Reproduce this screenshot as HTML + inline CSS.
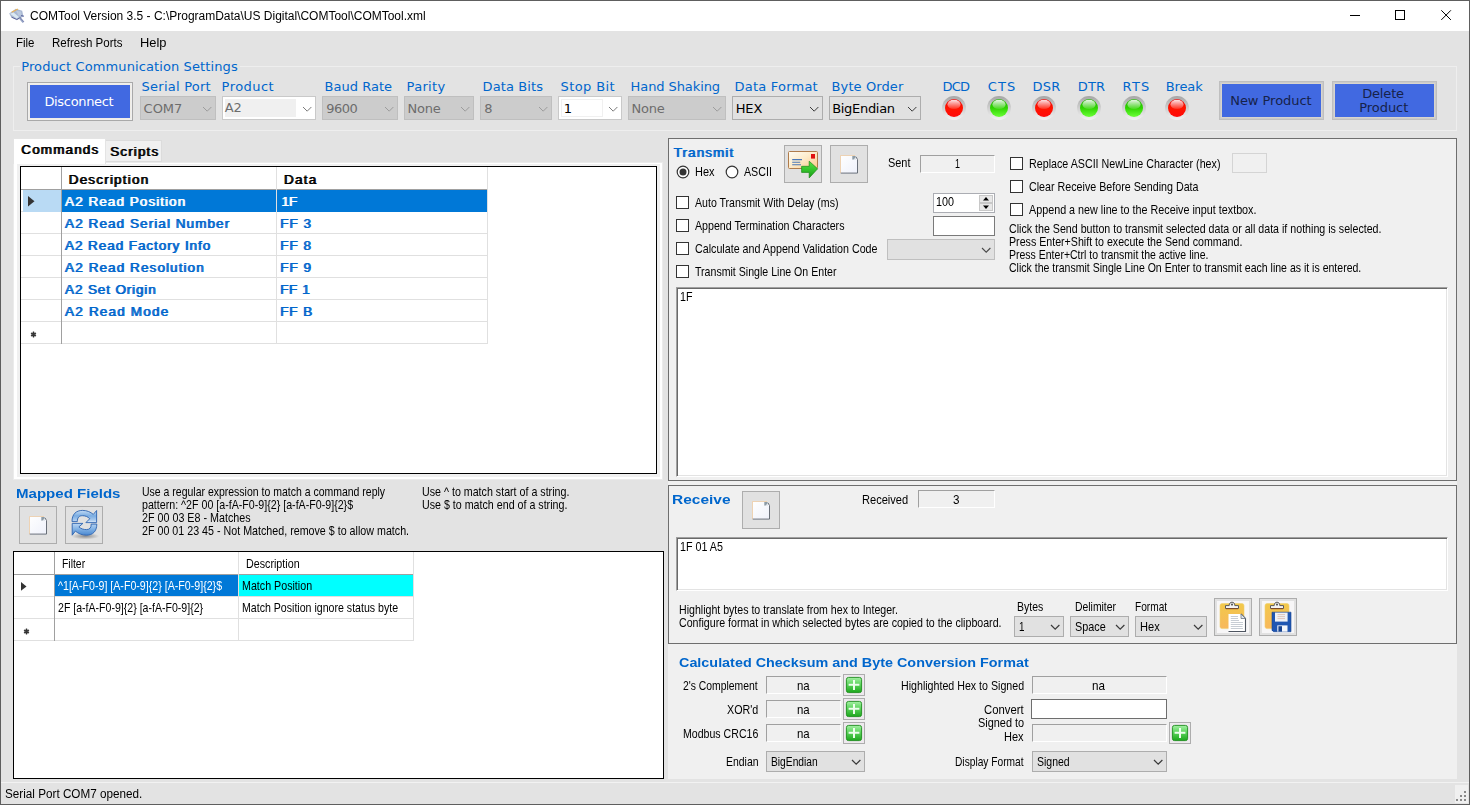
<!DOCTYPE html><html><head><meta charset="utf-8"><title>COMTool</title><style>
html,body{margin:0;padding:0}body{width:1470px;height:805px;overflow:hidden;background:#E3E3E3;position:relative;font-family:"Liberation Sans",sans-serif}
#w div{position:absolute;box-sizing:border-box}#w span.t{position:absolute;white-space:pre;line-height:1;transform-origin:0 50%}#w svg{position:absolute;overflow:visible}
.fverd{font-family:"DejaVu Sans","Liberation Sans",sans-serif}
</style></head><body><div id="w">
<svg style="left:0;top:0" width="0" height="0"><defs>
<linearGradient id="gDoc" x1="0" y1="0" x2="1" y2="1"><stop offset="0" stop-color="#ffffff"/><stop offset="1" stop-color="#eef1fb"/></linearGradient>
<linearGradient id="gEnv" x1="0" y1="0" x2="1" y2="1"><stop offset="0" stop-color="#fffdf6"/><stop offset="0.45" stop-color="#fdeccc"/><stop offset="1" stop-color="#fcc98a"/></linearGradient>
<linearGradient id="gArr" x1="0" y1="0" x2="0" y2="1"><stop offset="0" stop-color="#58e048"/><stop offset="0.5" stop-color="#35c42c"/><stop offset="1" stop-color="#1a9a16"/></linearGradient>
<linearGradient id="gRef" x1="0" y1="0" x2="0" y2="1"><stop offset="0" stop-color="#c4dcf5"/><stop offset="0.45" stop-color="#7aace2"/><stop offset="0.8" stop-color="#a9caee"/><stop offset="1" stop-color="#e4eefa"/></linearGradient>
<linearGradient id="gRef2" x1="0" y1="0" x2="0" y2="1"><stop offset="0" stop-color="#bcd7f3"/><stop offset="0.5" stop-color="#7fb0e4"/><stop offset="1" stop-color="#4a88d0"/></linearGradient>
<linearGradient id="gClip" x1="0" y1="0" x2="0" y2="1"><stop offset="0" stop-color="#f2c84a"/><stop offset="1" stop-color="#f8b85c"/></linearGradient>
<linearGradient id="gPlus" x1="0" y1="0" x2="0" y2="1"><stop offset="0" stop-color="#a4f0a4"/><stop offset="0.45" stop-color="#5cd45c"/><stop offset="1" stop-color="#1ca61c"/></linearGradient>
<radialGradient id="gSh" cx="0.5" cy="0.5" r="0.5"><stop offset="0" stop-color="#000" stop-opacity="0.38"/><stop offset="1" stop-color="#000" stop-opacity="0"/></radialGradient>
</defs></svg>
<div style="left:0px;top:0px;width:1470px;height:805px;background:#E3E3E3;border:1px solid #5E5E5E;"></div>
<div style="left:1px;top:1px;width:1468px;height:30px;background:#fff;"></div>
<svg style="left:8px;top:7px" width="18" height="18" viewBox="0 0 18 18"><path d="M1.2 6.6L7.8 1.8L14.2 3.8L15.4 9.4L9.4 12.8L3.4 10.6Z" fill="#a9b8d2"/><path d="M3.4 4.8L9.6 1.4L10.2 2.4L4 5.8Z" fill="#f0b048" opacity="0.9"/><path d="M2 6.8L5.6 5.4L11 10L8.6 11.6Z" fill="#dbe9f3"/><path d="M8 3.8L13 4.4L13.6 8.4L10.6 8.8Z" fill="#bccadf"/><path d="M3.6 10.2L8.8 12.6L12.6 10.4M13 8.6L16 9.2" stroke="#4a5290" stroke-width="1" fill="none" opacity="0.85"/><path d="M11.8 11.2L15.4 15.4" stroke="#97a4c6" stroke-width="2"/><path d="M12.6 11L15.9 14.8" stroke="#5a649a" stroke-width="0.6"/></svg>
<svg style="left:1340px;top:1px" width="128" height="30" viewBox="0 0 128 30"><g stroke="#000" stroke-width="1" fill="none"><path d="M10 14.5H20"/><rect x="55.5" y="9.5" width="9" height="9"/><path d="M101.3 9.3l9.6 9.6M110.9 9.3l-9.6 9.6"/></g></svg>
<div style="left:13px;top:66px;width:1444px;height:65px;border:1px solid #EEEEEE;"></div>
<div style="left:20px;top:60px;width:220px;height:12px;background:#E3E3E3;"></div>
<div style="left:27px;top:82px;width:106px;height:39px;background:#4169E1;border:1px solid #A9A9A9;box-shadow:inset 0 0 0 1px #EFEFEF,inset 0 0 0 2px #F0EDE6;"></div>
<div style="left:140px;top:96px;width:76px;height:24px;background:#CCCCCC;border:1px solid #BFBFBF;"></div>
<svg style="left:201.8px;top:105.7px" width="10.4" height="6.2" viewBox="-1 -1 10.4 6.2"><path d="M0 0L4.2 4.2L8.4 0" fill="none" stroke="#9c9c9c" stroke-width="1"/></svg>
<div style="left:222px;top:96px;width:94px;height:24px;background:#fff;border:1px solid #C9C9C9;"></div>
<svg style="left:301.8px;top:105.7px" width="10.4" height="6.2" viewBox="-1 -1 10.4 6.2"><path d="M0 0L4.2 4.2L8.4 0" fill="none" stroke="#7a7a7a" stroke-width="1"/></svg>
<div style="left:225px;top:99px;width:71px;height:18px;background:#F0F0F0;"></div>
<div style="left:322px;top:96px;width:76px;height:24px;background:#CCCCCC;border:1px solid #BFBFBF;"></div>
<svg style="left:383.8px;top:105.7px" width="10.4" height="6.2" viewBox="-1 -1 10.4 6.2"><path d="M0 0L4.2 4.2L8.4 0" fill="none" stroke="#9c9c9c" stroke-width="1"/></svg>
<div style="left:404px;top:96px;width:70px;height:24px;background:#CCCCCC;border:1px solid #BFBFBF;"></div>
<svg style="left:459.8px;top:105.7px" width="10.4" height="6.2" viewBox="-1 -1 10.4 6.2"><path d="M0 0L4.2 4.2L8.4 0" fill="none" stroke="#9c9c9c" stroke-width="1"/></svg>
<div style="left:480px;top:96px;width:72px;height:24px;background:#CCCCCC;border:1px solid #BFBFBF;"></div>
<svg style="left:537.8px;top:105.7px" width="10.4" height="6.2" viewBox="-1 -1 10.4 6.2"><path d="M0 0L4.2 4.2L8.4 0" fill="none" stroke="#9c9c9c" stroke-width="1"/></svg>
<div style="left:558px;top:96px;width:64px;height:24px;background:#fff;border:1px solid #C9C9C9;"></div>
<svg style="left:607.8px;top:105.7px" width="10.4" height="6.2" viewBox="-1 -1 10.4 6.2"><path d="M0 0L4.2 4.2L8.4 0" fill="none" stroke="#7a7a7a" stroke-width="1"/></svg>
<div style="left:561px;top:99px;width:42px;height:18px;background:#fff;border:1px solid #F0F0F0;"></div>
<div style="left:628px;top:96px;width:98px;height:24px;background:#CCCCCC;border:1px solid #BFBFBF;"></div>
<svg style="left:711.8px;top:105.7px" width="10.4" height="6.2" viewBox="-1 -1 10.4 6.2"><path d="M0 0L4.2 4.2L8.4 0" fill="none" stroke="#9c9c9c" stroke-width="1"/></svg>
<div style="left:732px;top:96px;width:91px;height:24px;background:#E1E1E1;border:1px solid #ADADAD;"></div>
<svg style="left:808.8px;top:105.7px" width="10.4" height="6.2" viewBox="-1 -1 10.4 6.2"><path d="M0 0L4.2 4.2L8.4 0" fill="none" stroke="#3a3a3a" stroke-width="1"/></svg>
<div style="left:829px;top:96px;width:92px;height:24px;background:#E1E1E1;border:1px solid #ADADAD;"></div>
<svg style="left:906.8px;top:105.7px" width="10.4" height="6.2" viewBox="-1 -1 10.4 6.2"><path d="M0 0L4.2 4.2L8.4 0" fill="none" stroke="#3a3a3a" stroke-width="1"/></svg>
<svg style="left:0;top:0" width="0" height="0"><defs>
<linearGradient id="lr" x1="0" y1="0" x2="0" y2="1"><stop offset="0" stop-color="#ee0000"/><stop offset="0.5" stop-color="#ff1400"/><stop offset="1" stop-color="#ff0a0a"/></linearGradient>
<linearGradient id="lg" x1="0" y1="0" x2="0" y2="1"><stop offset="0" stop-color="#1fb400"/><stop offset="0.5" stop-color="#2fd400"/><stop offset="1" stop-color="#6bff38"/></linearGradient>
<linearGradient id="ring" x1="0" y1="0" x2="0" y2="1"><stop offset="0" stop-color="#a6a6a6"/><stop offset="0.5" stop-color="#cfcfcf"/><stop offset="1" stop-color="#f2f2f2"/></linearGradient>
<linearGradient id="gloss" x1="0" y1="0" x2="0" y2="1"><stop offset="0" stop-color="#fff" stop-opacity="0.9"/><stop offset="1" stop-color="#fff" stop-opacity="0.12"/></linearGradient>
<filter id="bl" x="-20%" y="-20%" width="140%" height="140%"><feGaussianBlur stdDeviation="0.6"/></filter>
</defs></svg>
<svg style="left:940px;top:93.8px" width="28" height="28" viewBox="-14 -14 28 28"><circle r="11.9" fill="url(#ring)" filter="url(#bl)"/><circle r="9" fill="url(#lr)"/><ellipse cx="0" cy="-3.6" rx="6.6" ry="4.6" fill="url(#gloss)"/></svg>
<svg style="left:985px;top:93.8px" width="28" height="28" viewBox="-14 -14 28 28"><circle r="11.9" fill="url(#ring)" filter="url(#bl)"/><circle r="9" fill="url(#lg)"/><ellipse cx="0" cy="-3.6" rx="6.6" ry="4.6" fill="url(#gloss)"/></svg>
<svg style="left:1030px;top:93.8px" width="28" height="28" viewBox="-14 -14 28 28"><circle r="11.9" fill="url(#ring)" filter="url(#bl)"/><circle r="9" fill="url(#lr)"/><ellipse cx="0" cy="-3.6" rx="6.6" ry="4.6" fill="url(#gloss)"/></svg>
<svg style="left:1075px;top:93.8px" width="28" height="28" viewBox="-14 -14 28 28"><circle r="11.9" fill="url(#ring)" filter="url(#bl)"/><circle r="9" fill="url(#lg)"/><ellipse cx="0" cy="-3.6" rx="6.6" ry="4.6" fill="url(#gloss)"/></svg>
<svg style="left:1120px;top:93.8px" width="28" height="28" viewBox="-14 -14 28 28"><circle r="11.9" fill="url(#ring)" filter="url(#bl)"/><circle r="9" fill="url(#lg)"/><ellipse cx="0" cy="-3.6" rx="6.6" ry="4.6" fill="url(#gloss)"/></svg>
<svg style="left:1163px;top:93.8px" width="28" height="28" viewBox="-14 -14 28 28"><circle r="11.9" fill="url(#ring)" filter="url(#bl)"/><circle r="9" fill="url(#lr)"/><ellipse cx="0" cy="-3.6" rx="6.6" ry="4.6" fill="url(#gloss)"/></svg>
<div style="left:1219px;top:81px;width:105px;height:39px;background:#4169E1;border:1px solid #BFBFBF;box-shadow:inset 0 0 0 1px #CBCBCB,inset 0 0 0 2px #D8D5CE;"></div>
<div style="left:1332px;top:81px;width:105px;height:39px;background:#4169E1;border:1px solid #BFBFBF;box-shadow:inset 0 0 0 1px #CBCBCB,inset 0 0 0 2px #D8D5CE;"></div>
<div style="left:13px;top:162px;width:650px;height:318px;background:#fff;border:1px solid #EBEBEB;"></div>
<div style="left:17px;top:164px;width:643px;height:313px;background:#F0F0F0;"></div>
<div style="left:105px;top:140px;width:57px;height:22px;background:#F0F0F0;border:1px solid #DCDCDC;"></div>
<div style="left:13px;top:138px;width:93px;height:26px;background:#fff;border:1px solid #E4E4E4;border-bottom:none;"></div>
<div style="left:20px;top:166px;width:637px;height:308px;background:#fff;border:1px solid #000;"></div>
<div style="left:21px;top:189px;width:467px;height:1px;background:#A0A0A0;"></div>
<div style="left:21px;top:211px;width:467px;height:1px;background:#E0E0E0;"></div>
<div style="left:21px;top:233px;width:467px;height:1px;background:#E0E0E0;"></div>
<div style="left:21px;top:255px;width:467px;height:1px;background:#E0E0E0;"></div>
<div style="left:21px;top:277px;width:467px;height:1px;background:#E0E0E0;"></div>
<div style="left:21px;top:299px;width:467px;height:1px;background:#E0E0E0;"></div>
<div style="left:21px;top:321px;width:467px;height:1px;background:#E0E0E0;"></div>
<div style="left:21px;top:343px;width:467px;height:1px;background:#E0E0E0;"></div>
<div style="left:61px;top:167px;width:1px;height:177px;background:#A0A0A0;"></div>
<div style="left:276px;top:167px;width:1px;height:177px;background:#E0E0E0;"></div>
<div style="left:487px;top:167px;width:1px;height:177px;background:#E0E0E0;"></div>
<div style="left:23px;top:190px;width:38px;height:22px;background:#B9DAF4;"></div>
<div style="left:62px;top:190px;width:214px;height:22px;background:#0078D7;"></div>
<div style="left:277px;top:190px;width:210px;height:22px;background:#0078D7;"></div>
<svg style="left:27.5px;top:196px" width="6.5" height="10.6" viewBox="0 0 6.5 10.6"><path d="M0 0L6.5 5.3L0 10.6Z" fill="#333"/></svg>
<svg style="left:29.5px;top:330.5px" width="7" height="7" viewBox="-3.5 -3.5 7 7"><circle r="2.3" fill="#777"/><g stroke="#333" stroke-width="1.3"><path d="M0 -2.9V2.9M-2.5 -1.5L2.5 1.5M-2.5 1.5L2.5 -1.5"/></g></svg>
<div style="left:19px;top:506px;width:38px;height:38px;background:#E1E1E1;border:1px solid #ADADAD;"></div>
<div style="left:65px;top:506px;width:38px;height:38px;background:#E1E1E1;border:1px solid #ADADAD;"></div>
<svg style="left:28px;top:515px" width="21" height="22" viewBox="-1 -1 21 22"><path d="M0.4 0.4H15.7V1.6L17.8 4.4V18.4H0.4Z" fill="url(#gDoc)"/><path d="M0.5 18.2V0.5H15.2" fill="none" stroke="#ecc9a0" stroke-width="0.9" opacity="0.85"/><path d="M16 1.9L17.5 4.5V18.1H0.7" fill="none" stroke="#59606a" stroke-width="0.9"/><path d="M12.3 1H15.7V4.6H12.3Z" fill="#8d9ca6"/><path d="M13.3 4.7H15.8V2.2Z" fill="#f4f6fb"/></svg>
<svg style="left:65px;top:506px" width="38" height="38" viewBox="0 0 38 38"><ellipse cx="20.4" cy="30.2" rx="14" ry="3.2" fill="url(#gSh)"/><path d="M7 15.6C7 8.2 11 4.4 17.6 4.4C22 4.4 25.5 6 28.3 8.4L31.6 4.5V16.6H20.9L24.8 12.7C22.6 10.6 20.4 9.7 17.4 9.7C14 9.7 12.4 11.5 12.3 15.6Z" fill="url(#gRef)" stroke="#2c63b0" stroke-width="0.9" stroke-linejoin="round"/><path d="M31.8 18.1C31.8 25.4 27.8 29.2 21.4 29.2C17 29.2 13.3 27.6 10.4 25.1L7.2 29.2V17.4H17.9L13.9 20.9C16 22.8 18.6 23.6 21.4 23.6C24.8 23.6 26.3 21.6 26.2 18.1Z" fill="url(#gRef2)" stroke="#2c63b0" stroke-width="0.9" stroke-linejoin="round"/></svg>
<div style="left:13px;top:551px;width:651px;height:228px;background:#fff;border:1px solid #000;"></div>
<div style="left:14px;top:574px;width:400px;height:1px;background:#A0A0A0;"></div>
<div style="left:14px;top:596px;width:400px;height:1px;background:#E0E0E0;"></div>
<div style="left:14px;top:618px;width:400px;height:1px;background:#E0E0E0;"></div>
<div style="left:14px;top:640px;width:400px;height:1px;background:#E0E0E0;"></div>
<div style="left:54px;top:552px;width:1px;height:89px;background:#A0A0A0;"></div>
<div style="left:238px;top:552px;width:1px;height:89px;background:#E0E0E0;"></div>
<div style="left:413px;top:552px;width:1px;height:89px;background:#E0E0E0;"></div>
<div style="left:55px;top:575px;width:183px;height:21px;background:#0078D7;"></div>
<div style="left:239px;top:575px;width:174px;height:21px;background:#00FFFF;"></div>
<svg style="left:21px;top:582.2px" width="5.5" height="8.8" viewBox="0 0 5.5 8.8"><path d="M0 0L5.5 4.4L0 8.8Z" fill="#333"/></svg>
<svg style="left:22.5px;top:627.5px" width="7" height="7" viewBox="-3.5 -3.5 7 7"><circle r="2.3" fill="#777"/><g stroke="#333" stroke-width="1.3"><path d="M0 -2.9V2.9M-2.5 -1.5L2.5 1.5M-2.5 1.5L2.5 -1.5"/></g></svg>
<div style="left:668px;top:138px;width:789px;height:641px;background:#F0F0F0;"></div>
<div style="left:668px;top:138px;width:789px;height:343px;background:#F0F0F0;border:1px solid #6E6E6E;"></div>
<svg style="left:675.8px;top:164.8px" width="14" height="14" viewBox="-7 -7 14 14"><circle r="5.8" fill="#fff" stroke="#333" stroke-width="1.2"/><circle r="3.5" fill="#333"/></svg>
<svg style="left:724.8px;top:164.8px" width="14" height="14" viewBox="-7 -7 14 14"><circle r="5.8" fill="#fff" stroke="#333" stroke-width="1.2"/></svg>
<div style="left:784px;top:145px;width:38px;height:38px;background:#E1E1E1;border:1px solid #ADADAD;"></div>
<div style="left:830px;top:145px;width:38px;height:38px;background:#E1E1E1;border:1px solid #ADADAD;"></div>
<svg style="left:784px;top:145px" width="38" height="38" viewBox="0 0 38 38"><rect x="4.5" y="6.5" width="29" height="17" rx="1" fill="url(#gEnv)" stroke="#b07c4c" stroke-width="1"/><rect x="27" y="9" width="4" height="4.6" fill="#e01010"/><path d="M8.2 14.6H18M8.2 17.2H16.2M8.2 19.8H17" stroke="#4b78b8" stroke-width="1.1" fill="none"/><path d="M17.6 21.3H25.2V16.2L33.6 23.8L25.2 32.9V27.4H17.6Z" fill="url(#gArr)" stroke="#1c8a18" stroke-width="0.7"/></svg>
<svg style="left:839px;top:154px" width="21" height="22" viewBox="-1 -1 21 22"><path d="M0.4 0.4H15.7V1.6L17.8 4.4V18.4H0.4Z" fill="url(#gDoc)"/><path d="M0.5 18.2V0.5H15.2" fill="none" stroke="#ecc9a0" stroke-width="0.9" opacity="0.85"/><path d="M16 1.9L17.5 4.5V18.1H0.7" fill="none" stroke="#59606a" stroke-width="0.9"/><path d="M12.3 1H15.7V4.6H12.3Z" fill="#8d9ca6"/><path d="M13.3 4.7H15.8V2.2Z" fill="#f4f6fb"/></svg>
<div style="left:920px;top:155px;width:75px;height:18px;background:#F0F0F0;border-top:1px solid #A0A0A0;border-left:1px solid #A0A0A0;border-right:1px solid #fff;border-bottom:1px solid #fff;"></div>
<div style="left:676px;top:196px;width:13px;height:13px;background:#fff;border:1px solid #333;"></div>
<div style="left:676px;top:219px;width:13px;height:13px;background:#fff;border:1px solid #333;"></div>
<div style="left:676px;top:242px;width:13px;height:13px;background:#fff;border:1px solid #333;"></div>
<div style="left:676px;top:265px;width:13px;height:13px;background:#fff;border:1px solid #333;"></div>
<div style="left:933px;top:193px;width:62px;height:20px;background:#fff;border:1px solid #ABADB3;"></div>
<div style="left:979px;top:195px;width:14px;height:8px;background:#E8E8E8;border:1px solid #C8C8C8;"></div>
<div style="left:979px;top:203px;width:14px;height:8px;background:#E8E8E8;border:1px solid #C8C8C8;"></div>
<svg style="left:983px;top:197px" width="6" height="4" viewBox="0 0 6 4"><path d="M0 3.5L3 0L6 3.5Z" fill="#000"/></svg>
<svg style="left:983px;top:205px" width="6" height="4" viewBox="0 0 6 4"><path d="M0 0.5L3 4L6 0.5Z" fill="#000"/></svg>
<div style="left:933px;top:216px;width:62px;height:20px;background:#fff;border:1px solid #7A7A7A;"></div>
<div style="left:887px;top:239px;width:108px;height:21px;background:#E1E1E1;border:1px solid #BFBFBF;"></div>
<svg style="left:980.8px;top:246.70000000000002px" width="10.4" height="6.2" viewBox="-1 -1 10.4 6.2"><path d="M0 0L4.2 4.2L8.4 0" fill="none" stroke="#4a4a4a" stroke-width="1.1"/></svg>
<div style="left:1010px;top:157px;width:13px;height:13px;background:#fff;border:1px solid #333;"></div>
<div style="left:1010px;top:180px;width:13px;height:13px;background:#fff;border:1px solid #333;"></div>
<div style="left:1010px;top:203px;width:13px;height:13px;background:#fff;border:1px solid #333;"></div>
<div style="left:1232px;top:153px;width:35px;height:20px;background:#F0F0F0;border:1px solid #D4D4D4;"></div>
<div style="left:676px;top:287px;width:772px;height:190px;background:#fff;border-top:1px solid #A0A0A0;border-left:1px solid #A0A0A0;border-right:1px solid #fff;border-bottom:1px solid #fff;box-shadow:inset 1px 1px 0 #696969,inset -1px -1px 0 #E3E3E3;"></div>
<div style="left:668px;top:485px;width:789px;height:159px;background:#F0F0F0;border:1px solid #6E6E6E;"></div>
<div style="left:742px;top:491px;width:38px;height:38px;background:#E1E1E1;border:1px solid #ADADAD;"></div>
<svg style="left:751px;top:500px" width="21" height="22" viewBox="-1 -1 21 22"><path d="M0.4 0.4H15.7V1.6L17.8 4.4V18.4H0.4Z" fill="url(#gDoc)"/><path d="M0.5 18.2V0.5H15.2" fill="none" stroke="#ecc9a0" stroke-width="0.9" opacity="0.85"/><path d="M16 1.9L17.5 4.5V18.1H0.7" fill="none" stroke="#59606a" stroke-width="0.9"/><path d="M12.3 1H15.7V4.6H12.3Z" fill="#8d9ca6"/><path d="M13.3 4.7H15.8V2.2Z" fill="#f4f6fb"/></svg>
<div style="left:918px;top:490px;width:77px;height:18px;background:#F0F0F0;border-top:1px solid #A0A0A0;border-left:1px solid #A0A0A0;border-right:1px solid #fff;border-bottom:1px solid #fff;"></div>
<div style="left:676px;top:537px;width:772px;height:54px;background:#fff;border-top:1px solid #A0A0A0;border-left:1px solid #A0A0A0;border-right:1px solid #fff;border-bottom:1px solid #fff;box-shadow:inset 1px 1px 0 #696969,inset -1px -1px 0 #E3E3E3;"></div>
<div style="left:1014px;top:616px;width:50px;height:21px;background:#E1E1E1;border:1px solid #ADADAD;"></div>
<svg style="left:1049.8px;top:623.6999999999999px" width="10.4" height="6.2" viewBox="-1 -1 10.4 6.2"><path d="M0 0L4.2 4.2L8.4 0" fill="none" stroke="#3a3a3a" stroke-width="1.2"/></svg>
<div style="left:1070px;top:616px;width:59px;height:21px;background:#E1E1E1;border:1px solid #ADADAD;"></div>
<svg style="left:1114.8px;top:623.6999999999999px" width="10.4" height="6.2" viewBox="-1 -1 10.4 6.2"><path d="M0 0L4.2 4.2L8.4 0" fill="none" stroke="#3a3a3a" stroke-width="1.2"/></svg>
<div style="left:1135px;top:616px;width:72px;height:21px;background:#E1E1E1;border:1px solid #ADADAD;"></div>
<svg style="left:1192.8px;top:623.6999999999999px" width="10.4" height="6.2" viewBox="-1 -1 10.4 6.2"><path d="M0 0L4.2 4.2L8.4 0" fill="none" stroke="#3a3a3a" stroke-width="1.2"/></svg>
<div style="left:1214px;top:598px;width:38px;height:38px;background:#E1E1E1;border:1px solid #ADADAD;"></div>
<div style="left:1259px;top:598px;width:38px;height:38px;background:#E1E1E1;border:1px solid #ADADAD;"></div>
<svg style="left:1214px;top:598px" width="38" height="38" viewBox="0 0 38 38"><rect x="3" y="3" width="32" height="32" fill="#f7f6f7"/><rect x="6" y="5.6" width="24" height="25" rx="2" fill="url(#gClip)" stroke="#f0d070" stroke-width="0.6"/><path d="M11.5 10.5V7.6H15.2C15.2 5.4 16.4 4.2 18 4.2S20.8 5.4 20.8 7.6H24.5V10.5Z" fill="#f4f4f4" stroke="#5a5a5a" stroke-width="1"/><circle cx="18" cy="6.6" r="1.1" fill="#5a5a5a"/><path d="M12 10.6H24" stroke="#7a4a2a" stroke-width="1.2"/><path d="M14.5 16H27L31.5 20.5V33.5H14.5Z" fill="#ffffff"/><path d="M27 16L31.5 20.5V33.5H14.5" fill="none" stroke="#4e5560" stroke-width="1.1"/><path d="M27 16V20.5H31.5Z" fill="#dfe5ee" stroke="#6c7683" stroke-width="0.8"/><path d="M16.8 18.5H24M16.8 20.5H24M16.8 22.5H25M16.8 24.5H29M16.8 26.5H29M16.8 28.5H28.5M16.8 30.5H29" stroke="#b9c0c9" stroke-width="0.8"/></svg>
<svg style="left:1259px;top:598px" width="38" height="38" viewBox="0 0 38 38"><rect x="3" y="3" width="32" height="32" fill="#f7f6f7"/><rect x="6" y="5.6" width="24" height="25" rx="2" fill="url(#gClip)" stroke="#f0d070" stroke-width="0.6"/><path d="M11.5 10.5V7.6H15.2C15.2 5.4 16.4 4.2 18 4.2S20.8 5.4 20.8 7.6H24.5V10.5Z" fill="#f4f4f4" stroke="#5a5a5a" stroke-width="1"/><circle cx="18" cy="6.6" r="1.1" fill="#5a5a5a"/><path d="M12 10.6H24" stroke="#7a4a2a" stroke-width="1.2"/><path d="M13 14.2H32V33.7H14.5L13 32.2Z" fill="#1f56b2" stroke="#17438f" stroke-width="0.6"/><rect x="16" y="14.6" width="12.6" height="9" fill="#eef1f6"/><path d="M18.5 16.6H26M18.5 18.6H26M18.5 20.6H26" stroke="#d9b8a8" stroke-width="0.8"/><rect x="18.3" y="27.4" width="10.2" height="6.3" fill="#f4f6fa"/><rect x="19.4" y="28.2" width="3.6" height="5.5" fill="#17438f"/></svg>
<div style="left:668px;top:644px;width:789px;height:135px;background:#F0F0F0;"></div>
<div style="left:766px;top:676px;width:75px;height:18px;background:#F0F0F0;border-top:1px solid #A0A0A0;border-left:1px solid #A0A0A0;border-right:1px solid #fff;border-bottom:1px solid #fff;"></div>
<div style="left:843px;top:674px;width:22px;height:22px;background:#E1E1E1;border:1px solid #ADADAD;"></div>
<svg style="left:843px;top:674px" width="22" height="22" viewBox="0 0 22 22"><rect x="1" y="1" width="20" height="20" fill="#eee9ee"/><rect x="3.4" y="3.4" width="15.2" height="15.2" rx="2.2" fill="url(#gPlus)" stroke="#1c8c1c" stroke-width="0.9"/><path d="M11 6V16M5.6 10.8H16.4" stroke="#f4fff4" stroke-width="2" fill="none" opacity="0.95"/></svg>
<div style="left:766px;top:700px;width:75px;height:18px;background:#F0F0F0;border-top:1px solid #A0A0A0;border-left:1px solid #A0A0A0;border-right:1px solid #fff;border-bottom:1px solid #fff;"></div>
<div style="left:843px;top:698px;width:22px;height:22px;background:#E1E1E1;border:1px solid #ADADAD;"></div>
<svg style="left:843px;top:698px" width="22" height="22" viewBox="0 0 22 22"><rect x="1" y="1" width="20" height="20" fill="#eee9ee"/><rect x="3.4" y="3.4" width="15.2" height="15.2" rx="2.2" fill="url(#gPlus)" stroke="#1c8c1c" stroke-width="0.9"/><path d="M11 6V16M5.6 10.8H16.4" stroke="#f4fff4" stroke-width="2" fill="none" opacity="0.95"/></svg>
<div style="left:766px;top:724px;width:75px;height:18px;background:#F0F0F0;border-top:1px solid #A0A0A0;border-left:1px solid #A0A0A0;border-right:1px solid #fff;border-bottom:1px solid #fff;"></div>
<div style="left:843px;top:722px;width:22px;height:22px;background:#E1E1E1;border:1px solid #ADADAD;"></div>
<svg style="left:843px;top:722px" width="22" height="22" viewBox="0 0 22 22"><rect x="1" y="1" width="20" height="20" fill="#eee9ee"/><rect x="3.4" y="3.4" width="15.2" height="15.2" rx="2.2" fill="url(#gPlus)" stroke="#1c8c1c" stroke-width="0.9"/><path d="M11 6V16M5.6 10.8H16.4" stroke="#f4fff4" stroke-width="2" fill="none" opacity="0.95"/></svg>
<div style="left:766px;top:751px;width:99px;height:21px;background:#E1E1E1;border:1px solid #ADADAD;"></div>
<svg style="left:850.8px;top:758.6999999999999px" width="10.4" height="6.2" viewBox="-1 -1 10.4 6.2"><path d="M0 0L4.2 4.2L8.4 0" fill="none" stroke="#3a3a3a" stroke-width="1.2"/></svg>
<div style="left:1032px;top:676px;width:135px;height:18px;background:#F0F0F0;border-top:1px solid #A0A0A0;border-left:1px solid #A0A0A0;border-right:1px solid #fff;border-bottom:1px solid #fff;"></div>
<div style="left:1031px;top:699px;width:136px;height:20px;background:#fff;border:1px solid #6E6E6E;"></div>
<div style="left:1032px;top:724px;width:135px;height:18px;background:#F0F0F0;border-top:1px solid #A0A0A0;border-left:1px solid #A0A0A0;border-right:1px solid #fff;border-bottom:1px solid #fff;"></div>
<div style="left:1169px;top:722px;width:22px;height:22px;background:#E1E1E1;border:1px solid #ADADAD;"></div>
<svg style="left:1169px;top:722px" width="22" height="22" viewBox="0 0 22 22"><rect x="1" y="1" width="20" height="20" fill="#eee9ee"/><rect x="3.4" y="3.4" width="15.2" height="15.2" rx="2.2" fill="url(#gPlus)" stroke="#1c8c1c" stroke-width="0.9"/><path d="M11 6V16M5.6 10.8H16.4" stroke="#f4fff4" stroke-width="2" fill="none" opacity="0.95"/></svg>
<div style="left:1032px;top:751px;width:135px;height:21px;background:#E1E1E1;border:1px solid #ADADAD;"></div>
<svg style="left:1152.8px;top:758.6999999999999px" width="10.4" height="6.2" viewBox="-1 -1 10.4 6.2"><path d="M0 0L4.2 4.2L8.4 0" fill="none" stroke="#3a3a3a" stroke-width="1.2"/></svg>
<div style="left:1px;top:782px;width:1468px;height:1px;background:#F2F2F2;"></div>
<div style="left:1455px;top:785px;width:13px;height:18px;background:#F0F0F0;"></div>
<div style="left:1464px;top:791px;width:2px;height:2px;background:#8a8a8a;"></div>
<div style="left:1460px;top:795px;width:2px;height:2px;background:#8a8a8a;"></div>
<div style="left:1464px;top:795px;width:2px;height:2px;background:#8a8a8a;"></div>
<div style="left:1456px;top:799px;width:2px;height:2px;background:#8a8a8a;"></div>
<div style="left:1460px;top:799px;width:2px;height:2px;background:#8a8a8a;"></div>
<div style="left:1464px;top:799px;width:2px;height:2px;background:#8a8a8a;"></div>
<span class="t fseg" style="font-size:12px;color:#000;top:10.34px;transform:scaleX(0.9989);margin-top:-0.1px;left:30.0px;">COMTool Version 3.5 - C:\ProgramData\US Digital\COMTool\COMTool.xml</span>
<span class="t fseg" style="font-size:12px;color:#000;top:36.84px;transform:scaleX(0.9564);margin-top:-0.1px;left:16.2px;">File</span>
<span class="t fseg" style="font-size:12px;color:#000;top:36.84px;transform:scaleX(0.9610);margin-top:-0.1px;left:52.2px;">Refresh Ports</span>
<span class="t fseg" style="font-size:12px;color:#000;top:36.84px;transform:scaleX(1.0734);margin-top:-0.1px;left:140.2px;">Help</span>
<span class="t fverd" style="font-size:13px;color:#0066CC;top:60.00px;letter-spacing:0.106px;left:21.2px;">Product Communication Settings</span>
<span class="t fverd" style="font-size:13px;color:#fff;top:94.50px;letter-spacing:-0.324px;left:44.400000000000006px;">Disconnect</span>
<span class="t fverd" style="font-size:13px;color:#0066CC;top:80.00px;letter-spacing:0.240px;left:141.6px;">Serial Port</span>
<span class="t fverd" style="font-size:13px;color:#6D6D6D;top:101.60px;letter-spacing:-0.032px;left:143.6px;">COM7</span>
<span class="t fverd" style="font-size:13px;color:#0066CC;top:80.00px;letter-spacing:0.457px;left:221.6px;">Product</span>
<span class="t fverd" style="font-size:13px;color:#6D6D6D;top:101.30px;letter-spacing:-0.272px;left:224.79999999999998px;">A2</span>
<span class="t fverd" style="font-size:13px;color:#0066CC;top:80.00px;letter-spacing:0.021px;left:324.59999999999997px;">Baud Rate</span>
<span class="t fverd" style="font-size:13px;color:#6D6D6D;top:101.60px;letter-spacing:-0.531px;left:326.2px;">9600</span>
<span class="t fverd" style="font-size:13px;color:#0066CC;top:80.00px;letter-spacing:0.306px;left:406.59999999999997px;">Parity</span>
<span class="t fverd" style="font-size:13px;color:#6D6D6D;top:101.60px;letter-spacing:-0.274px;left:407.59999999999997px;">None</span>
<span class="t fverd" style="font-size:13px;color:#0066CC;top:80.00px;letter-spacing:0.115px;left:482.59999999999997px;">Data Bits</span>
<span class="t fverd" style="font-size:13px;color:#6D6D6D;top:101.60px;left:484.2px;">8</span>
<span class="t fverd" style="font-size:13px;color:#0066CC;top:80.00px;letter-spacing:0.396px;left:560.6px;">Stop Bit</span>
<span class="t fverd" style="font-size:13px;color:#000;top:101.60px;left:563.8000000000001px;">1</span>
<span class="t fverd" style="font-size:13px;color:#0066CC;top:80.00px;letter-spacing:-0.088px;left:630.6px;">Hand Shaking</span>
<span class="t fverd" style="font-size:13px;color:#6D6D6D;top:101.60px;letter-spacing:-0.274px;left:631.6px;">None</span>
<span class="t fverd" style="font-size:13px;color:#0066CC;top:80.00px;letter-spacing:0.212px;left:734.6px;">Data Format</span>
<span class="t fverd" style="font-size:13px;color:#000;top:101.60px;letter-spacing:-0.203px;left:735.8000000000001px;">HEX</span>
<span class="t fverd" style="font-size:13px;color:#0066CC;top:80.00px;letter-spacing:0.100px;left:831.6px;">Byte Order</span>
<span class="t fverd" style="font-size:13px;color:#000;top:101.60px;letter-spacing:-0.302px;left:832.2px;">BigEndian</span>
<span class="t fverd" style="font-size:13px;color:#0066CC;top:80.00px;letter-spacing:-0.805px;left:942.6px;">DCD</span>
<span class="t fverd" style="font-size:13px;color:#0066CC;top:80.00px;letter-spacing:1.109px;left:987.8000000000001px;">CTS</span>
<span class="t fverd" style="font-size:13px;color:#0066CC;top:80.00px;letter-spacing:0.202px;left:1032.6000000000001px;">DSR</span>
<span class="t fverd" style="font-size:13px;color:#0066CC;top:80.00px;letter-spacing:0.158px;left:1077.8px;">DTR</span>
<span class="t fverd" style="font-size:13px;color:#0066CC;top:80.00px;letter-spacing:1.209px;left:1122.6000000000001px;">RTS</span>
<span class="t fverd" style="font-size:13px;color:#0066CC;top:80.00px;letter-spacing:-0.146px;left:1165.8px;">Break</span>
<span class="t fverd" style="font-size:13px;color:#16224a;top:94.20px;letter-spacing:-0.036px;left:1230.2px;">New Product</span>
<span class="t fverd" style="font-size:13px;color:#16224a;top:86.60px;letter-spacing:-0.164px;left:1362.2px;">Delete</span>
<span class="t fverd" style="font-size:13px;color:#16224a;top:100.60px;letter-spacing:-0.043px;left:1359.2px;">Product</span>
<span class="t fsb" style="font-size:13.5px;color:#000;top:142.57px;text-shadow:1px 0 0 #000;letter-spacing:1.124px;left:20.8px;">Commands</span>
<span class="t fsb" style="font-size:13.5px;color:#000;top:144.77px;text-shadow:1px 0 0 #000;letter-spacing:1.122px;left:109.7px;">Scripts</span>
<span class="t fsb" style="font-size:13.5px;color:#000;top:172.57px;text-shadow:1px 0 0 #000;letter-spacing:1.197px;left:68.2px;">Description</span>
<span class="t fsb" style="font-size:13.5px;color:#000;top:172.57px;text-shadow:1px 0 0 #000;letter-spacing:1.256px;left:283.4px;">Data</span>
<span class="t fsb" style="font-size:13.5px;color:#fff;top:194.77px;text-shadow:1px 0 0 #fff;letter-spacing:1.051px;left:64.60000000000001px;">A2 Read Position</span>
<span class="t fsb" style="font-size:13.5px;color:#fff;top:194.77px;text-shadow:1px 0 0 #fff;left:280.9px;">1F</span>
<span class="t fsb" style="font-size:13.5px;color:#0066CC;top:216.77px;text-shadow:1px 0 0 #0066CC;letter-spacing:1.076px;left:64.60000000000001px;">A2 Read Serial Number</span>
<span class="t fsb" style="font-size:13.5px;color:#0066CC;top:216.77px;text-shadow:1px 0 0 #0066CC;letter-spacing:1.011px;left:279.7px;">FF 3</span>
<span class="t fsb" style="font-size:13.5px;color:#0066CC;top:238.77px;text-shadow:1px 0 0 #0066CC;letter-spacing:0.922px;left:64.60000000000001px;">A2 Read Factory Info</span>
<span class="t fsb" style="font-size:13.5px;color:#0066CC;top:238.77px;text-shadow:1px 0 0 #0066CC;letter-spacing:1.011px;left:279.7px;">FF 8</span>
<span class="t fsb" style="font-size:13.5px;color:#0066CC;top:260.77px;text-shadow:1px 0 0 #0066CC;letter-spacing:1.090px;left:64.60000000000001px;">A2 Read Resolution</span>
<span class="t fsb" style="font-size:13.5px;color:#0066CC;top:260.77px;text-shadow:1px 0 0 #0066CC;letter-spacing:1.011px;left:279.7px;">FF 9</span>
<span class="t fsb" style="font-size:13.5px;color:#0066CC;top:282.77px;text-shadow:1px 0 0 #0066CC;letter-spacing:0.859px;left:64.60000000000001px;">A2 Set Origin</span>
<span class="t fsb" style="font-size:13.5px;color:#0066CC;top:282.77px;text-shadow:1px 0 0 #0066CC;letter-spacing:0.578px;left:279.7px;">FF 1</span>
<span class="t fsb" style="font-size:13.5px;color:#0066CC;top:304.77px;text-shadow:1px 0 0 #0066CC;letter-spacing:1.185px;left:64.60000000000001px;">A2 Read Mode</span>
<span class="t fsb" style="font-size:13.5px;color:#0066CC;top:304.77px;text-shadow:1px 0 0 #0066CC;letter-spacing:0.917px;left:279.7px;">FF B</span>
<span class="t far" style="font-size:13.6px;color:#0066CC;top:486.79px;font-weight:bold;transform:scaleX(1.1067);margin-top:-0.1px;left:16.2px;">Mapped Fields</span>
<span class="t fms" style="font-size:12.4px;color:#000;top:485.70px;transform:scaleX(0.8465);margin-top:0.8px;left:142.1px;">Use a regular expression to match a command reply</span>
<span class="t fms" style="font-size:12.4px;color:#000;top:498.70px;transform:scaleX(0.8599);margin-top:0.8px;left:142.1px;">pattern: ^2F 00 [a-fA-F0-9]{2} [a-fA-F0-9]{2}$</span>
<span class="t fms" style="font-size:12.4px;color:#000;top:511.70px;transform:scaleX(0.8663);margin-top:0.8px;left:142.1px;">2F 00 03 E8 - Matches</span>
<span class="t fms" style="font-size:12.4px;color:#000;top:524.70px;transform:scaleX(0.8637);margin-top:0.8px;left:142.1px;">2F 00 01 23 45 - Not Matched, remove $ to allow match.</span>
<span class="t fms" style="font-size:12.4px;color:#000;top:485.70px;transform:scaleX(0.8615);margin-top:0.8px;left:422.3px;">Use ^ to match start of a string.</span>
<span class="t fms" style="font-size:12.4px;color:#000;top:498.70px;transform:scaleX(0.8616);margin-top:0.8px;left:422.3px;">Use $ to match end of a string.</span>
<span class="t fms" style="font-size:12.4px;color:#000;top:557.50px;transform:scaleX(0.8386);margin-top:0.8px;left:62.1px;">Filter</span>
<span class="t fms" style="font-size:12.4px;color:#000;top:557.50px;transform:scaleX(0.8647);margin-top:0.8px;left:246.1px;">Description</span>
<span class="t fms" style="font-size:12.4px;color:#fff;top:579.50px;transform:scaleX(0.8588);margin-top:0.8px;left:58.1px;">^1[A-F0-9] [A-F0-9]{2} [A-F0-9]{2}$</span>
<span class="t fms" style="font-size:12.4px;color:#000;top:579.50px;transform:scaleX(0.8626);margin-top:0.8px;left:242.1px;">Match Position</span>
<span class="t fms" style="font-size:12.4px;color:#000;top:601.50px;transform:scaleX(0.8530);margin-top:0.8px;left:58.1px;">2F [a-fA-F0-9]{2} [a-fA-F0-9]{2}</span>
<span class="t fms" style="font-size:12.4px;color:#000;top:601.50px;transform:scaleX(0.8553);margin-top:0.8px;left:242.1px;">Match Position ignore status byte</span>
<span class="t fsb" style="font-size:13.5px;color:#0066CC;top:145.57px;text-shadow:1px 0 0 #0066CC;letter-spacing:1.069px;left:673.2px;">Transmit</span>
<span class="t fms" style="font-size:12.4px;color:#000;top:165.10px;transform:scaleX(0.8845);margin-top:0.8px;left:694.7px;">Hex</span>
<span class="t fms" style="font-size:12.4px;color:#000;top:165.10px;transform:scaleX(0.8618);margin-top:0.8px;left:743.7px;">ASCII</span>
<span class="t fms" style="font-size:12.4px;color:#000;top:156.50px;transform:scaleX(0.8824);margin-top:0.8px;left:887.7px;">Sent</span>
<span class="t fms" style="font-size:12.4px;color:#000;top:157.50px;transform:scaleX(0.7240);margin-top:0.8px;left:955.2px;">1</span>
<span class="t fms" style="font-size:12.4px;color:#000;top:196.50px;transform:scaleX(0.8542);margin-top:0.8px;left:694.7px;">Auto Transmit With Delay (ms)</span>
<span class="t fms" style="font-size:12.4px;color:#000;top:219.50px;transform:scaleX(0.8590);margin-top:0.8px;left:694.7px;">Append Termination Characters</span>
<span class="t fms" style="font-size:12.4px;color:#000;top:242.50px;transform:scaleX(0.8638);margin-top:0.8px;left:694.7px;">Calculate and Append Validation Code</span>
<span class="t fms" style="font-size:12.4px;color:#000;top:265.50px;transform:scaleX(0.8549);margin-top:0.8px;left:694.7px;">Transmit Single Line On Enter</span>
<span class="t fms" style="font-size:12.4px;color:#000;top:195.20px;transform:scaleX(0.8701);margin-top:0.8px;left:935.7px;">100</span>
<span class="t fms" style="font-size:12.4px;color:#000;top:157.50px;transform:scaleX(0.8635);margin-top:0.8px;left:1028.7px;">Replace ASCII NewLine Character (hex)</span>
<span class="t fms" style="font-size:12.4px;color:#000;top:180.50px;transform:scaleX(0.8635);margin-top:0.8px;left:1028.7px;">Clear Receive Before Sending Data</span>
<span class="t fms" style="font-size:12.4px;color:#000;top:203.50px;transform:scaleX(0.8691);margin-top:0.8px;left:1028.7px;">Append a new line to the Receive input textbox.</span>
<span class="t fms" style="font-size:12.4px;color:#000;top:222.10px;transform:scaleX(0.8598);margin-top:0.8px;left:1009.3000000000001px;">Click the Send button to transmit selected data or all data if nothing is selected.</span>
<span class="t fms" style="font-size:12.4px;color:#000;top:235.10px;transform:scaleX(0.8590);margin-top:0.8px;left:1009.3000000000001px;">Press Enter+Shift to execute the Send command.</span>
<span class="t fms" style="font-size:12.4px;color:#000;top:248.10px;transform:scaleX(0.8479);margin-top:0.8px;left:1009.3000000000001px;">Press Enter+Ctrl to transmit the active line.</span>
<span class="t fms" style="font-size:12.4px;color:#000;top:261.10px;transform:scaleX(0.8497);margin-top:0.8px;left:1009.3000000000001px;">Click the transmit Single Line On Enter to transmit each line as it is entered.</span>
<span class="t fms" style="font-size:12.4px;color:#000;top:290.50px;transform:scaleX(0.8639);margin-top:0.8px;left:679.7px;">1F</span>
<span class="t far" style="font-size:13.6px;color:#0066CC;top:493.19px;font-weight:bold;transform:scaleX(1.1380);margin-top:-0.1px;left:672.2px;">Receive</span>
<span class="t fms" style="font-size:12.4px;color:#000;top:493.00px;transform:scaleX(0.8944);margin-top:0.8px;left:862.0px;">Received</span>
<span class="t fms" style="font-size:12.4px;color:#000;top:493.50px;transform:scaleX(0.9412);margin-top:0.8px;left:953.2px;">3</span>
<span class="t fms" style="font-size:12.4px;color:#000;top:540.50px;transform:scaleX(0.8668);margin-top:0.8px;left:679.7px;">1F 01 A5</span>
<span class="t fms" style="font-size:12.4px;color:#000;top:603.00px;transform:scaleX(0.8547);margin-top:0.8px;left:678.7px;">Highlight bytes to translate from hex to Integer.</span>
<span class="t fms" style="font-size:12.4px;color:#000;top:616.00px;transform:scaleX(0.8576);margin-top:0.8px;left:678.7px;">Configure format in which selected bytes are copied to the clipboard.</span>
<span class="t fms" style="font-size:12.4px;color:#000;top:600.10px;transform:scaleX(0.8452);margin-top:0.8px;left:1017.0px;">Bytes</span>
<span class="t fms" style="font-size:12.4px;color:#000;top:600.10px;transform:scaleX(0.8386);margin-top:0.8px;left:1075.2px;">Delimiter</span>
<span class="t fms" style="font-size:12.4px;color:#000;top:600.10px;transform:scaleX(0.8178);margin-top:0.8px;left:1135.1000000000001px;">Format</span>
<span class="t fms" style="font-size:12.4px;color:#000;top:620.00px;transform:scaleX(0.7964);margin-top:0.8px;left:1018.7px;">1</span>
<span class="t fms" style="font-size:12.4px;color:#000;top:620.00px;transform:scaleX(0.8736);margin-top:0.8px;left:1074.5px;">Space</span>
<span class="t fms" style="font-size:12.4px;color:#000;top:620.00px;transform:scaleX(0.8936);margin-top:0.8px;left:1139.5px;">Hex</span>
<span class="t far" style="font-size:13.4px;color:#0066CC;top:655.66px;font-weight:bold;transform:scaleX(1.0730);margin-top:-0.1px;left:678.8000000000001px;">Calculated Checksum and Byte Conversion Format</span>
<span class="t fms" style="font-size:12.4px;color:#000;top:679.10px;transform:scaleX(0.8380);margin-top:0.8px;left:683.3000000000001px;">2&#x27;s Complement</span>
<span class="t fms" style="font-size:12.4px;color:#000;top:703.10px;transform:scaleX(0.8668);margin-top:0.8px;left:726.7px;">XOR&#x27;d</span>
<span class="t fms" style="font-size:12.4px;color:#000;top:727.10px;transform:scaleX(0.8542);margin-top:0.8px;left:682.7px;">Modbus CRC16</span>
<span class="t fms" style="font-size:12.4px;color:#000;top:755.50px;transform:scaleX(0.8421);margin-top:0.8px;left:726.1px;">Endian</span>
<span class="t fms" style="font-size:12.4px;color:#000;top:679.30px;transform:scaleX(0.9205);margin-top:0.8px;left:796.5px;">na</span>
<span class="t fms" style="font-size:12.4px;color:#000;top:703.30px;transform:scaleX(0.9205);margin-top:0.8px;left:796.5px;">na</span>
<span class="t fms" style="font-size:12.4px;color:#000;top:727.30px;transform:scaleX(0.9205);margin-top:0.8px;left:796.5px;">na</span>
<span class="t fms" style="font-size:12.4px;color:#000;top:755.00px;transform:scaleX(0.8265);margin-top:0.8px;left:770.5px;">BigEndian</span>
<span class="t fms" style="font-size:12.4px;color:#000;top:679.10px;transform:scaleX(0.8591);margin-top:0.8px;left:900.7px;">Highlighted Hex to Signed</span>
<span class="t fms" style="font-size:12.4px;color:#000;top:679.30px;transform:scaleX(0.9422);margin-top:0.8px;left:1092.2px;">na</span>
<span class="t fms" style="font-size:12.4px;color:#000;top:703.30px;transform:scaleX(0.9126);margin-top:0.8px;left:984.2px;">Convert</span>
<span class="t fms" style="font-size:12.4px;color:#000;top:716.50px;transform:scaleX(0.8805);margin-top:0.8px;left:977.7px;">Signed to</span>
<span class="t fms" style="font-size:12.4px;color:#000;top:729.80px;transform:scaleX(0.8890);margin-top:0.8px;left:1004.2px;">Hex</span>
<span class="t fms" style="font-size:12.4px;color:#000;top:755.10px;transform:scaleX(0.8234);margin-top:0.8px;left:955.2px;">Display Format</span>
<span class="t fms" style="font-size:12.4px;color:#000;top:755.00px;transform:scaleX(0.8473);margin-top:0.8px;left:1036.5px;">Signed</span>
<span class="t fseg" style="font-size:12px;color:#000;top:787.84px;transform:scaleX(0.9755);margin-top:-0.1px;left:4.9px;">Serial Port COM7 opened.</span>
</div></body></html>
